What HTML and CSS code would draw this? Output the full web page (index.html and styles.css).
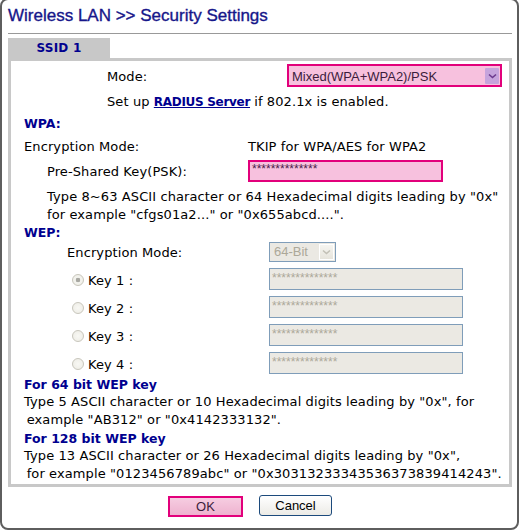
FILE: index.html
```html
<!DOCTYPE html>
<html>
<head>
    <meta charset="UTF-8">
    <link rel="stylesheet" href="styles.css">
</head>
<body>
    <div class="frame">
        <h1 class="title">Wireless LAN &gt;&gt; Security Settings</h1>

        <div class="tabs">
            <span class="tab">SSID 1</span>
        </div>

        <div class="panel">
            <div class="row row-mode">
                <span class="label label-mode">Mode:</span>
                <div class="select select-hot">
                    <span class="select-text">Mixed(WPA+WPA2)/PSK</span>
                    <span class="select-arrow">
                        <svg viewBox="0 0 9 6"><path d="M1 1.5l3.5 3 3.5-3"/></svg>
                    </span>
                </div>
            </div>
            <div class="row row-radius">
                Set up&nbsp;<a href="#" class="link">RADIUS Server</a>&nbsp;if 802.1x is enabled.
            </div>

            <div class="section-title section-wpa">WPA:</div>
            <div class="row row-enc">
                <span class="label label-enc">Encryption Mode:</span>
                <span>TKIP for WPA/AES for WPA2</span>
            </div>
            <div class="row row-psk">
                <span class="label label-psk">Pre-Shared Key(PSK):</span>
                <div class="field field-hot">**************</div>
            </div>
            <div class="hint">
                Type 8~63 ASCII character or 64 Hexadecimal digits leading by "0x"<br>
                for example "cfgs01a2..." or "0x655abcd....".
            </div>

            <div class="section-title">WEP:</div>
            <div class="row row-wep-enc">
                <span class="label label-wep">Encryption Mode:</span>
                <div class="select select-off">
                    <span class="select-text">64-Bit</span>
                    <span class="select-arrow">
                        <svg viewBox="0 0 9 6"><path d="M1 1.5l3.5 3 3.5-3"/></svg>
                    </span>
                </div>
            </div>

            <div class="keys">
                <div class="row row-key">
                    <span class="radio radio-on"></span>
                    <span class="label label-key">Key 1 :</span>
                    <div class="field field-off">**************</div>
                </div>
                <div class="row row-key">
                    <span class="radio"></span>
                    <span class="label label-key">Key 2 :</span>
                    <div class="field field-off">**************</div>
                </div>
                <div class="row row-key">
                    <span class="radio"></span>
                    <span class="label label-key">Key 3 :</span>
                    <div class="field field-off">**************</div>
                </div>
                <div class="row row-key">
                    <span class="radio"></span>
                    <span class="label label-key">Key 4 :</span>
                    <div class="field field-off">**************</div>
                </div>
            </div>

            <div class="notes">
                <div class="note-title">For 64 bit WEP key</div>
                <p class="note">
                    Type 5 ASCII character or 10 Hexadecimal digits leading by "0x", for<br>
                    &thinsp;example "AB312" or "0x4142333132".
                </p>
                <div class="note-title">For 128 bit WEP key</div>
                <p class="note">
                    Type 13 ASCII character or 26 Hexadecimal digits leading by "0x",<br>
                    &thinsp;for example "0123456789abc" or "0x30313233343536373839414243".
                </p>
            </div>
        </div>

        <div class="actions">
            <button class="button button-ok">OK</button>
            <button class="button button-cancel">Cancel</button>
        </div>
    </div>
</body>
</html>
```

FILE: styles.css
```css
body {
    margin: 0;
    font-family: "DejaVu Sans", Verdana, sans-serif;
    font-size: 13px;
    line-height: 18px;
    letter-spacing: 0.1px;
    color: #000;
    background: #fff;
}

.frame {
    width: 519px;
    box-sizing: border-box;
    margin-top: -2px;
    padding: 0 5px 11px 6px;
    border: 2px solid #5e5e5e;
    border-radius: 8px;
}

.title {
    margin: 0;
    padding: 6px 0 7px 0;
    font-family: "Liberation Sans", Arial, sans-serif;
    font-size: 17px;
    font-weight: normal;
    line-height: 20px;
    letter-spacing: 0;
    color: #16168a;
    -webkit-text-stroke: 0.35px #16168a;
    border-bottom: 1px solid #999;
}

.tabs {
    display: flex;
    margin-top: 4px;
}

.tab {
    width: 102px;
    height: 20px;
    line-height: 20px;
    text-align: center;
    background: #c8c8c8;
    font-size: 12px;
    font-weight: bold;
    letter-spacing: 0.2px;
    color: #00008f;
}

.panel {
    border: 3px solid #c8c8c8;
    padding: 0 0 1px 13px;
    white-space: nowrap;
}

.row {
    display: flex;
    align-items: flex-start;
}

.label {
    flex: none;
}

/* mode */
.row-mode {
    margin-top: 3px;
    padding-left: 83px;
    align-items: baseline;
}

.label-mode {
    width: 180px;
}

.row-radius {
    margin-top: 6px;
    padding-left: 83px;
}

.link {
    color: #00008f;
    font-size: 12px;
    font-weight: bold;
    letter-spacing: -0.3px;
    text-decoration: underline;
}

.section-title {
    margin-top: 4px;
    font-size: 12.5px;
    font-weight: bold;
    letter-spacing: 0;
    color: #00008f;
}

.row-enc {
    margin-top: 5px;
}

.label-enc {
    width: 224px;
}

.row-psk {
    margin-top: 4px;
    padding-left: 23px;
}

.label-psk {
    width: 201px;
    padding-top: 3px;
}

.hint {
    margin-top: 6px;
    padding-left: 23px;
}

.hint + .section-title {
    margin-top: 0;
}

.row-wep-enc {
    padding-left: 43px;
}

.label-wep {
    width: 202px;
    padding-top: 2px;
}

.keys {
    display: flex;
    flex-direction: column;
    gap: 6px;
    margin-top: 6px;
    padding-left: 48px;
}

.row-key {
    height: 22px;
}

.label-key {
    width: 181px;
    margin-left: 4px;
    padding-top: 4px;
}

/* selects and fields */
.select {
    display: flex;
    box-sizing: border-box;
    letter-spacing: 0;
    font-family: "Liberation Sans", Arial, sans-serif;
}

.select-text {
    flex: 1;
}

.select-arrow {
    display: flex;
    align-items: center;
    justify-content: center;
}

.select-arrow svg {
    width: 9px;
    height: 6px;
    fill: none;
    stroke-width: 1.6;
}

.select-hot {
    width: 215px;
    height: 23px;
    border: 2px solid #e2007b;
    background: #f7c1de;
    color: #3c1c3c;
}

.select-hot .select-text {
    padding: 3px 0 0 3px;
    font-size: 13px;
    line-height: 16px;
}

.select-hot .select-arrow {
    width: 14px;
    margin: 2px 1px 1px 0;
    background: #c6a4dc;
    border-radius: 1px;
}

.select-hot .select-arrow svg {
    stroke: #6c3a8e;
}

.select-off {
    width: 67px;
    height: 20px;
    border: 1px solid #7f9db9;
    background: #ebe9e3;
    color: #aca899;
}

.select-off .select-text {
    padding: 1px 0 0 4px;
    font-size: 13px;
    line-height: 16px;
}

.select-off .select-arrow {
    width: 15px;
    margin: 1px;
    background: linear-gradient(#f6f5f1, #e6e4dc);
    border: 1px solid #fff;
    box-sizing: border-box;
}

.select-off .select-arrow svg {
    stroke: #c2c0b6;
}

.field {
    box-sizing: border-box;
    height: 22px;
    padding: 0 2px;
    font-family: "Liberation Sans", Arial, sans-serif;
    font-size: 12px;
    letter-spacing: 0;
}

.field-hot {
    width: 195px;
    border: 2px solid #e2007b;
    background: #f7c1de;
    color: #4a1c4a;
    line-height: 14px;
}

.field-off {
    width: 194px;
    border: 1px solid #7f9db9;
    background: #ebe9e3;
    color: #aca899;
    padding-top: 1px;
    line-height: 16px;
}

.radio {
    flex: none;
    box-sizing: border-box;
    width: 12px;
    height: 12px;
    margin-top: 6px;
    border: 1px solid #c8c6bc;
    border-radius: 50%;
    background: radial-gradient(circle, #f8f8f4 0, #ecebe4 100%);
}

.radio-on {
    background: radial-gradient(circle, #a8a8a2 0 2px, #f4f4ef 2.6px, #ecebe4 100%);
}

/* notes */
.notes {
    margin-top: 3px;
}

.note-title {
    font-size: 12.5px;
    font-weight: bold;
    letter-spacing: 0;
    color: #00008f;
    line-height: 16px;
}

.note {
    margin: 0 0 2px 0;
}

.note:last-child {
    margin-bottom: 0;
}

/* buttons */
.actions {
    display: flex;
    gap: 16px;
    margin-top: 8px;
    padding-left: 160px;
}

.button {
    box-sizing: border-box;
    height: 21px;
    padding: 0;
    font-family: "Liberation Sans", Arial, sans-serif;
    font-size: 13px;
    cursor: pointer;
}

.button-ok {
    width: 75px;
    border: 2px solid #e2007b;
    background: linear-gradient(#f6cde1, #eeb2cf);
    color: #3c1c3c;
    margin-top: 1px;
}

.button-cancel {
    width: 73px;
    border: 1px solid #1c4a7c;
    border-radius: 3px;
    background: linear-gradient(#ffffff, #ecebe6);
    color: #000;
}
```
